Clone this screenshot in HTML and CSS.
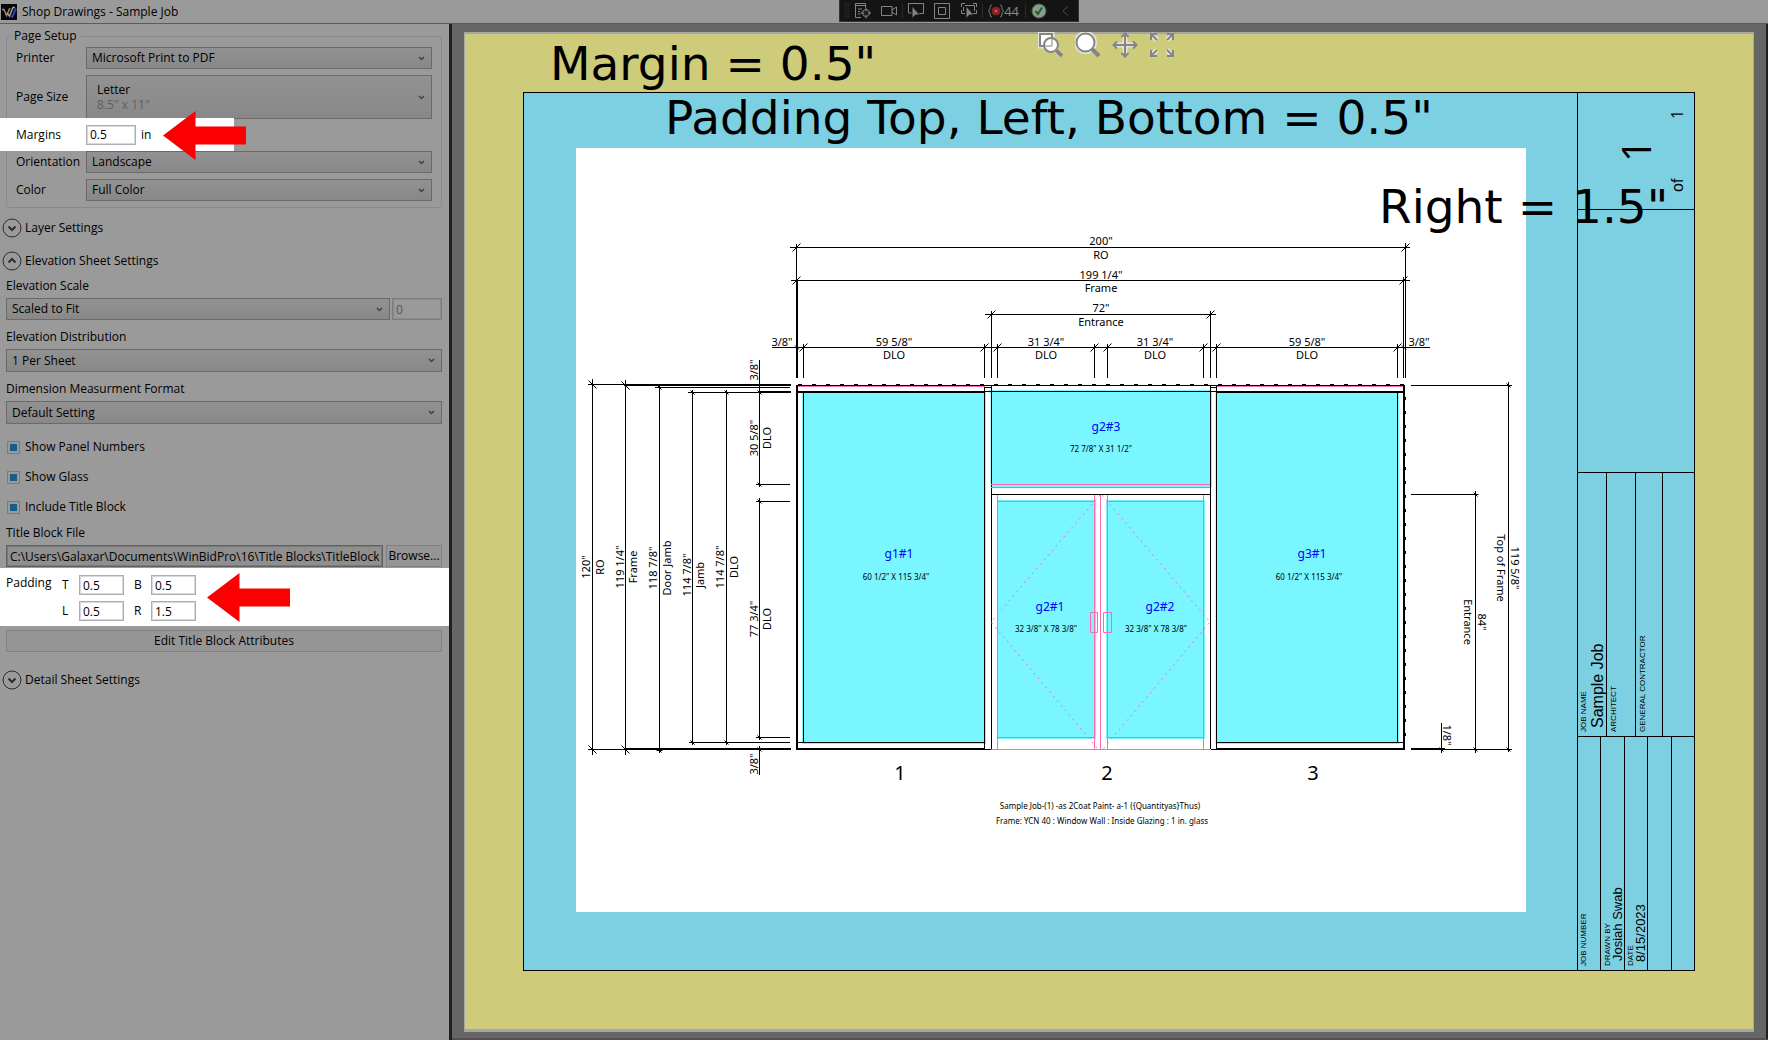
FILE: index.html
```html
<!DOCTYPE html>
<html lang="en">
<head>
<meta charset="utf-8">
<title>Shop Drawings - Sample Job</title>
<link rel="stylesheet" href="styles.css">
</head>
<body>
<header class="titlebar">
  <div class="titlebar-name">
    <svg class="app-icon" viewBox="0 0 16 16" aria-hidden="true"><rect width="16" height="16" fill="#05060c"/><path d="M1 5.500h2l2.500 6L9 4" fill="none" stroke="#9a8a7c" stroke-width="1.500"/><path d="M6 9l2.500 3L12 3.500h2" fill="none" stroke="#b09c8a" stroke-width="1.500"/><path d="M9.500 12.500h2L15 4.500" fill="none" stroke="#2a44b0" stroke-width="2"/></svg>
    <h1>Shop Drawings - Sample Job</h1>
  </div>
  <div class="debugbar" role="toolbar" aria-label="Debug tools">
    <svg class="grip" viewBox="0 0 6 18" aria-hidden="true"><path d="M1 0v18M5 0v18" stroke="#4c4c4c" stroke-width="1" stroke-dasharray="1 2"/><path d="M3 1v16" stroke="#4c4c4c" stroke-dasharray="1 2"/></svg>
    <button aria-label="Go to live visual tree"><svg viewBox="0 0 16 16"><path d="M6 14.500H.5V.5h10v4M.5 2.500h10M3 6h4M3 8.500h2M3 11h2"/><circle cx="11" cy="10" r="3.500"/><path d="M11 4.500v4M11 11.500v4M5.500 10h4M12.500 10h3.500"/></svg></button>
    <button aria-label="Record"><svg viewBox="0 0 16 16"><path d="M0.500 3.500h10.500v9H.5zM11 7l4.500-3v8L11 9"/></svg></button>
    <i class="bar-rule"></i>
    <button aria-label="Select element"><svg viewBox="0 0 16 16"><path d="M4 10H0.500V.5h15v10H11"/><path class="solid" d="M4 3v12.500l3.500-3.500h4.500z"/></svg></button>
    <button aria-label="Display layout adorners"><svg viewBox="0 0 16 16"><path d="M.5.5h15v15H.5zM4.500 4.500h7v7h-7z"/></svg></button>
    <button aria-label="Track focused element"><svg viewBox="0 0 16 16"><path d="M.5 4V.5H4M12 .5h3.500V4M.5 7v3.500H4M12 10.500h3.500V7M4 2.500h9.500V8M2.500 4v4"/><path class="solid" d="M5 3v12.500l3.500-3.500h4.500z"/></svg></button>
    <i class="bar-rule"></i>
    <button class="failures" aria-label="Binding failures"><svg viewBox="0 0 16 16"><path d="M4 2C1 2 3 7 .5 8 3 9 1 14 4 14M12 2c3 0 1 5 3.500 6C13 9 15 14 12 14"/><circle cx="8" cy="8" r="4" fill="#8e1c1c" stroke="#8e1c1c"/><path d="M6.500 6.500l3 3M9.500 6.500l-3 3"/></svg><span>44</span></button>
    <i class="bar-rule"></i>
    <button aria-label="Hot reload"><svg viewBox="0 0 16 16"><circle cx="8" cy="8" r="7" fill="#8e9a8e" stroke="#2f7338"/><path d="M4.500 8l2.500 3 4-6.500" stroke="#1f5f2a" stroke-width="2"/></svg></button>
    <button aria-label="Collapse"><svg viewBox="0 0 16 16"><path d="M11 3.500L6 8l5 4.500" stroke="#4c4c4c"/></svg></button>
  </div>
</header>

<div class="workspace">
  <form class="settings">
    <fieldset class="group">
      <legend>Page Setup</legend>
      <div class="field"><label for="printer">Printer</label><select id="printer"><option>Microsoft Print to PDF</option></select></div>
      <div class="field"><label for="size">Page Size</label><div class="size-box"><select id="size"><option>Letter</option></select><span class="size-note">8.5" x 11"</span></div></div>
      <div class="field spot-row"><label for="margins">Margins</label><input id="margins" value="0.5"><span>in</span>
        <svg class="arrow" viewBox="0 0 83 49" aria-hidden="true"><path d="M0 24.500L32.500 0v15.500H83v18H32.500V49z"/></svg></div>
      <div class="field"><label for="orientation">Orientation</label><select id="orientation"><option>Landscape</option></select></div>
      <div class="field"><label for="color">Color</label><select id="color"><option>Full Color</option></select></div>
    </fieldset>

    <button type="button" class="expander"><svg viewBox="0 0 20 20"><circle cx="10" cy="10" r="9"/><path d="M6.500 8.500L10 12l3.500-3.500"/></svg>Layer Settings</button>
    <button type="button" class="expander" aria-expanded="true"><svg viewBox="0 0 20 20"><circle cx="10" cy="10" r="9"/><path d="M6.500 11.500L10 8l3.500 3.500"/></svg>Elevation Sheet Settings</button>

    <div class="stack first">
      <label for="scale">Elevation Scale</label>
      <div class="pair"><select id="scale"><option>Scaled to Fit</option></select><input class="muted" aria-label="Scale value" value="0" disabled></div>
    </div>
    <div class="stack">
      <label for="dist">Elevation Distribution</label>
      <select id="dist"><option>1 Per Sheet</option></select>
    </div>
    <div class="stack">
      <label for="format">Dimension Measurment Format</label>
      <select id="format"><option>Default Setting</option></select>
    </div>
    <div class="checks">
      <label><input type="checkbox" checked>Show Panel Numbers</label>
      <label><input type="checkbox" checked>Show Glass</label>
      <label><input type="checkbox" checked>Include Title Block</label>
    </div>
    <div class="stack file">
      <label for="file">Title Block File</label>
      <div class="pair"><input id="file" class="path" value="C:\Users\Galaxar\Documents\WinBidPro\16\Title Blocks\TitleBlock-8.5x11.dxf"><button type="button" class="push">Browse...</button></div>
    </div>
    <div class="padding-band">
      <span class="band-name">Padding</span>
      <div class="pads">
        <label for="pt">T</label><input id="pt" value="0.5"><label for="pb">B</label><input id="pb" value="0.5">
        <label for="pl">L</label><input id="pl" value="0.5"><label for="pr">R</label><input id="pr" value="1.5">
      </div>
      <svg class="arrow" viewBox="0 0 83 49" aria-hidden="true"><path d="M0 24.500L32.500 0v15.500H83v18H32.500V49z"/></svg>
    </div>
    <button type="button" class="push wide">Edit Title Block Attributes</button>
    <button type="button" class="expander last"><svg viewBox="0 0 20 20"><circle cx="10" cy="10" r="9"/><path d="M6.500 8.500L10 12l3.500-3.500"/></svg>Detail Sheet Settings</button>
  </form>

  <main class="preview">
    <svg class="sheet" viewBox="465 34 1288 995" role="img" aria-label="Sheet preview">
      <defs>
        <path id="t" d="M-4 4L4-4"/>
        <path id="k" d="M-4-4L4 4"/>
        <path id="s" d="M-2-2L2 2M-3 0H3"/>
      </defs>
      <rect class="padding" x="523.500" y="92.500" width="1171" height="878"/>
      <rect class="paper" x="576" y="148" width="950" height="764"/>

      <!-- title block grid -->
      <path class="ln" d="M1577.500 92V970M1577 209.500H1694M1577 472.500H1694M1577 736.500H1694M1606.500 472V736M1635.500 472V736M1662.500 472V736M1600.500 736V970M1624.500 736V970M1647.500 736V970M1671.500 736V970"/>
      <g class="block">
        <text class="b16 sheet-no" transform="translate(1683 119) rotate(-90)">1</text>
        <text class="b40 sheet-no" transform="translate(1651 162) rotate(-90)">1</text>
        <text class="b16" transform="translate(1683 192) rotate(-90)">of</text>
        <text class="b8" transform="translate(1586 732) rotate(-90)">JOB NAME</text>
        <text class="b16" transform="translate(1603 728) rotate(-90)">Sample Job</text>
        <text class="b8" transform="translate(1616 732) rotate(-90)">ARCHITECT</text>
        <text class="b8" transform="translate(1645 732) rotate(-90)">GENERAL CONTRACTOR</text>
        <text class="b8" transform="translate(1586 966) rotate(-90)">JOB NUMBER</text>
        <text class="b8" transform="translate(1610 966) rotate(-90)">DRAWN BY</text>
        <text class="b13" transform="translate(1622 961) rotate(-90)">Josiah Swab</text>
        <text class="b8" transform="translate(1633 966) rotate(-90)">DATE</text>
        <text class="b13" transform="translate(1645 962) rotate(-90)">8/15/2023</text>
      </g>

      <!-- glass -->
      <g class="glass">
        <rect x="802" y="392" width="184" height="352"/>
        <rect x="989" y="390" width="223" height="97"/>
        <rect x="997" y="500" width="99" height="239"/>
        <rect x="1106" y="500" width="99" height="239"/>
        <rect x="1215" y="392" width="184" height="352"/>
      </g>
      <path class="mullion" d="M986.500 393V749h4V393zM1212.500 393V749h3V393z"/>

      <!-- aluminium frame -->
      <path class="ln" d="M797 385.500H1405M803.500 392V743M984.500 386V749M991.500 386V749M1210.500 386V749M1216.500 386V749M1397.500 392V743M985 387.500H991M1211 387.500H1216M985 391.500H1216M798 742.500H985M1217 742.500H1403M985 749.500H991M1211 749.500H1216M991 494.500H1210"/>
      <path class="ln w2" d="M797 385V749M798 392H985M1216 392H1403M796 749H985M1216 749H1404M1404 385V750"/>
      <path class="ln" stroke-dasharray="4 10" d="M798 384.500H1405"/>
      <path class="ln" stroke-dasharray="3 11" d="M1405.500 397V745"/>
      <path class="pk" d="M798 386.500H985M1217 386.500H1403M991 484.500H1210M991 487.500H1210M997.500 495V749M1094.500 495V749M1107.500 495V749M1203.500 495V749M1100.500 495V749M991 749.500H1210M997 501.500H1095M1107 501.500H1204M997 737.500H1095M1107 737.500H1204M1090.500 612.500h7v20h-7zM1103.500 612.500h8v20h-8z"/>
      <path class="pk swing" d="M1100 495L991 622L1098 749M1102 495L1210 622L1103 749"/>

      <!-- dimensions above -->
      <path class="ln" d="M790 247.500H1410M791 280.500H1410M985 314.500H1216M772 347.500H1430M796.500 244V378M803.500 344V378M984.500 344V378M991.500 311V378M997.500 344V378M1094.500 344V378M1107.500 344V378M1203.500 344V378M1210.500 311V378M1216.500 344V378M1397.500 344V378M1403.500 277V378M1405.500 243V378"/>
      <path class="ln" d="M797.500 280V378"/>
      <g class="ln">
        <use href="#t" x="796.500" y="247.500"/><use href="#t" x="1405.500" y="247.500"/>
        <use href="#t" x="796.500" y="280.500"/><use href="#t" x="1403.500" y="280.500"/>
        <use href="#t" x="991.500" y="314.500"/><use href="#t" x="1210.500" y="314.500"/>
        <use href="#t" x="803.500" y="347.500"/><use href="#t" x="984.500" y="347.500"/><use href="#t" x="997.500" y="347.500"/><use href="#t" x="1094.500" y="347.500"/><use href="#t" x="1107.500" y="347.500"/><use href="#t" x="1203.500" y="347.500"/><use href="#t" x="1216.500" y="347.500"/><use href="#t" x="1397.500" y="347.500"/>
        <use href="#s" x="797" y="347.500"/><use href="#s" x="1404" y="347.500"/>
      </g>
      <g class="dim">
        <text x="1101" y="245">200"</text><text x="1101" y="259">RO</text>
        <text x="1101" y="279">199 1/4"</text><text x="1101" y="292">Frame</text>
        <text x="1101" y="312">72"</text><text x="1101" y="326">Entrance</text>
        <text x="894" y="346">59 5/8"</text><text x="894" y="359">DLO</text>
        <text x="1046" y="346">31 3/4"</text><text x="1046" y="359">DLO</text>
        <text x="1155" y="346">31 3/4"</text><text x="1155" y="359">DLO</text>
        <text x="1307" y="346">59 5/8"</text><text x="1307" y="359">DLO</text>
        <text x="782" y="346">3/8"</text><text x="1419" y="346">3/8"</text>
      </g>

      <!-- dimensions at left -->
      <path class="ln" d="M592.500 379V755M625.500 380V755M659.500 385V753M692.500 390V745M726.500 390V745M759.500 360V487M759.500 498V740M759.500 746V775M588 384.500H626M655 387.500H790M688 392.500H790M756 484.500H790M756 501.500H790M756 737.500H790M689 742.500H790M588 749.500H626"/>
      <path class="ln w2" d="M624 385H791M759 392H791M624 749H791"/>
      <g class="ln">
        <use href="#k" x="592.500" y="384.500"/><use href="#k" x="592.500" y="749.500"/><use href="#k" x="625.500" y="385.500"/><use href="#k" x="625.500" y="749.500"/>
        <use href="#s" x="659.500" y="387.500"/><use href="#s" x="659.500" y="750.500"/><use href="#s" x="692.500" y="392.500"/><use href="#s" x="692.500" y="742.500"/><use href="#s" x="726.500" y="392.500"/><use href="#s" x="726.500" y="742.500"/>
        <use href="#s" x="759.500" y="392.500"/><use href="#s" x="759.500" y="484.500"/><use href="#s" x="759.500" y="501.500"/><use href="#s" x="759.500" y="737.500"/><use href="#s" x="759.500" y="749.500"/>
      </g>
      <g class="dim">
        <text transform="translate(590 567) rotate(-90)">120"</text><text transform="translate(604 567) rotate(-90)">RO</text>
        <text transform="translate(624 567) rotate(-90)">119 1/4"</text><text transform="translate(637 567) rotate(-90)">Frame</text>
        <text transform="translate(657 568) rotate(-90)">118 7/8"</text><text transform="translate(671 568) rotate(-90)">Door Jamb</text>
        <text transform="translate(691 575) rotate(-90)">114 7/8"</text><text transform="translate(704 575) rotate(-90)">Jamb</text>
        <text transform="translate(724 567) rotate(-90)">114 7/8"</text><text transform="translate(738 567) rotate(-90)">DLO</text>
        <text transform="translate(758 438) rotate(-90)">30 5/8"</text><text transform="translate(771 438) rotate(-90)">DLO</text>
        <text transform="translate(758 619) rotate(-90)">77 3/4"</text><text transform="translate(771 619) rotate(-90)">DLO</text>
        <text transform="translate(758 370) rotate(-90)">3/8"</text><text transform="translate(758 764) rotate(-90)">3/8"</text>
      </g>

      <!-- dimensions at right -->
      <path class="ln" d="M1411 385.500H1512M1508.500 382V752M1411 494.500H1478M1475.500 491V753M1441.500 723V753M1411 749.500H1512"/>
      <path class="ln w2" d="M1411 749H1445"/>
      <g class="ln"><use href="#s" x="1508.500" y="385.500"/><use href="#s" x="1508.500" y="749.500"/><use href="#s" x="1475.500" y="494.500"/><use href="#s" x="1475.500" y="749.500"/><use href="#s" x="1441.500" y="749.500"/></g>
      <g class="dim">
        <text transform="translate(1443 735) rotate(90)">1/8"</text>
        <text transform="translate(1478 622) rotate(90)">84"</text><text transform="translate(1464 622) rotate(90)">Entrance</text>
        <text transform="translate(1511 568) rotate(90)">119 5/8"</text><text transform="translate(1497 568) rotate(90)">Top of Frame</text>
      </g>

      <g class="tag">
        <text x="899" y="558">g1#1</text><text x="1106" y="431">g2#3</text><text x="1050" y="611">g2#1</text><text x="1160" y="611">g2#2</text><text x="1312" y="558">g3#1</text>
      </g>
      <g class="note">
        <text x="896" y="580">60 1/2" X 115 3/4"</text><text x="1101" y="452">72 7/8" X 31 1/2"</text><text x="1046" y="632">32 3/8" X 78 3/8"</text><text x="1156" y="632">32 3/8" X 78 3/8"</text><text x="1309" y="580">60 1/2" X 115 3/4"</text>
        <text x="1100" y="809">Sample Job-(1) -as 2Coat Paint- a-1 ({Quantityas}Thus)</text>
        <text x="1102" y="824">Frame: YCN 40 : Window Wall : Inside Glazing : 1 in. glass</text>
      </g>
      <g class="panel-no"><text x="900" y="780">1</text><text x="1107" y="780">2</text><text x="1313" y="780">3</text></g>
      <g class="callout">
        <text x="550" y="80">Margin = 0.5"</text>
        <text x="665" y="134">Padding Top, Left, Bottom = 0.5"</text>
        <text x="1379" y="223">Right = 1.5"</text>
      </g>
    </svg>
    <nav class="view-tools" aria-label="View">
      <button aria-label="Zoom window"><svg viewBox="0 0 26 26"><path class="halo" d="M2 2h12v12H2z"/><path class="fill" d="M2 2h12v12H2z"/><circle class="fill" cx="13" cy="13" r="7"/><path d="M7 14h7V7" stroke-width="1"/><path class="halo" d="M18 18l6 6"/><path d="M18 18l6 6" stroke-width="4"/></svg></button>
      <button aria-label="Zoom"><svg viewBox="0 0 26 26"><circle class="halo" cx="10.500" cy="10.500" r="9"/><circle class="fill" cx="10.500" cy="10.500" r="9"/><path d="M17 17l7 7" stroke-width="4"/></svg></button>
      <button aria-label="Pan"><svg viewBox="0 0 26 26"><path class="halo" d="M13 2v22M2 13h22"/><path d="M13 2v22M2 13h22M9.500 5L13 1.500 16.500 5M9.500 21l3.500 3.500 3.500-3.500M5 9.500L1.500 13 5 16.500M21 9.500l3.500 3.500-3.500 3.500"/></svg></button>
      <button aria-label="Fit to window"><svg viewBox="0 0 26 26"><path class="halo" d="M2 2l6 6M24 2l-6 6M2 24l6-6M24 24l-6-6"/><path d="M2 8V2h6M2 2l6 6M18 2h6v6M24 2l-6 6M2 18v6h6M2 24l6-6M24 18v6h-6M24 24l-6-6"/></svg></button>
    </nav>
  </main>
</div>
</body>
</html>
```
FILE: styles.css
```css
* { box-sizing: border-box; }
body {
  margin: 0;
  min-height: 100vh;
  display: flex;
  flex-direction: column;
  background: #9a9a9a;
  color: #000;
  font: 12px/16px "Open Sans", "Noto Sans", sans-serif;
}
button, input, select { font: inherit; color: inherit; margin: 0; }
button { padding: 0; border: 0; background: none; }

/* title bar */
.titlebar {
  display: grid;
  grid-template-columns: 4745fr 5255fr;
  height: 24px;
  border-bottom: 1px solid #5c5c5c;
}
.titlebar-name { display: flex; align-items: center; gap: 5px; padding-left: 1px; }
.titlebar h1 { margin: 0; font-size: 12px; font-weight: 400; }
.app-icon { width: 16px; height: 16px; }
.debugbar {
  justify-self: start;
  display: flex;
  align-items: center;
  width: 240px;
  height: 22px;
  padding: 0 0 0 4px;
  background: #141414;
  border: 1px solid #333;
  border-top: 0;
  color: #8a8a8a;
}
.debugbar button { flex: 1 1 26px; height: 20px; display: flex; align-items: center; justify-content: center; }
.debugbar svg { width: 16px; height: 16px; fill: none; stroke: #848484; flex: none; }
.debugbar .solid { fill: #848484; stroke: #141414; stroke-width: 1; }
.debugbar .grip { width: 6px; }
.debugbar .failures { flex: 0 0 42px; font-size: 13px; }
.bar-rule { width: 1px; height: 14px; background: #2c2c2c; }

/* settings column */
.workspace { flex: 1; display: grid; grid-template-columns: 452px minmax(0, 1fr); }
.settings {
  display: flex;
  flex-direction: column;
  border-right: 3px solid #1f2020;
  min-width: 0;
}
.group {
  margin: 4px 7px 0 6px;
  padding: 3px 9px 6px;
  border: 1px solid #85898c;
  border-radius: 4px;
  display: flex;
  flex-direction: column;
  gap: 6px;
}
.group legend { padding: 0 4px; margin-left: -6px; }
.field { display: grid; grid-template-columns: 70px 1fr; align-items: center; }
select {
  appearance: none;
  width: 100%;
  height: 22px;
  padding: 0 20px 0 5px;
  border: 1px solid #6a6a6a;
  border-radius: 0;
  background: url("data:image/svg+xml,%3Csvg xmlns='http://www.w3.org/2000/svg' width='7' height='5'%3E%3Cpath d='M1 1l2.500 2.500L6 1' fill='none' stroke='%23404040' stroke-width='1.500'/%3E%3C/svg%3E") no-repeat right 6px center, linear-gradient(#929292, #888);
}
.size-box { position: relative; }
.size-box select { height: 44px; padding: 0 20px 14px 10px; }
.size-note { position: absolute; left: 11px; top: 22px; color: #606060; pointer-events: none; }
input {
  height: 20px;
  padding: 0 3px;
  border: 1px solid #abadb3;
  border-radius: 0;
  background: #fff;
  box-shadow: inset 0 0 0 1px #d8d9dc;
}
.spot-row {
  position: relative;
  grid-template-columns: 70px 50px auto;
  width: 234px;
  height: 33px;
  margin: -7px 0 -6px -16px;
  padding-left: 16px;
  background: #fff;
}
.spot-row span { padding-left: 5px; }
.arrow { position: absolute; width: 83px; height: 49px; fill: #fa0000; }
.spot-row .arrow { left: 163px; top: -7px; }

.expander { display: flex; align-items: center; gap: 3px; height: 20px; margin: 10px 0 3px 2px; text-align: left; }
.expander svg { width: 20px; height: 20px; fill: none; stroke: #2c2c2c; }
.expander path { stroke-width: 2; }
.stack { display: flex; flex-direction: column; gap: 4px; padding: 5px 7px 4px 6px; }
.first { padding-top: 4px; }
.stack > select { height: 23px; }
.pair { display: grid; grid-template-columns: 1fr 50px; gap: 2px; }
.pair input { height: 22px; min-width: 0; }
.muted { background: #9a9a9a; border-color: #7c7c7c; box-shadow: inset 0 0 0 1px #8c8c8c; color: #555; }
.checks { display: flex; flex-direction: column; gap: 14px; padding: 11px 7px 5px; }
.checks label { display: flex; align-items: center; gap: 5px; }
.checks input {
  appearance: none;
  width: 13px;
  height: 13px;
  padding: 2px;
  border-color: #7a7a7a;
  background: #165f86 content-box;
  box-shadow: none;
}
.file .pair { grid-template-columns: 1fr 56px; gap: 3px; }
.file { padding-bottom: 1px; }
.path { background: #8f8f8f; border-color: #606060; box-shadow: inset 0 0 0 1px #7a7a7a; }
.push { height: 22px; border: 1px solid #808080; background: #959595; text-align: center; }
.wide { margin: 4px 7px 0 6px; }
.padding-band { position: relative; display: flex; height: 58px; padding: 7px 0 0 6px; background: #fff; }
.band-name { width: 56px; }
.pads {
  display: grid;
  grid-template-columns: 17px 55px 17px 45px;
  row-gap: 6px;
  align-content: start;
  align-items: center;
}
.pads input { width: 45px; }
.padding-band .arrow { left: 207px; top: 5px; }
.last { margin-top: 18px; }

/* preview */
.preview {
  position: relative;
  padding: 8px 12px 6px;
  background: #666;
  border-right: 2px solid #1f2020;
  border-bottom: 2px solid #554f52;
}
.sheet {
  display: block;
  box-sizing: content-box;
  width: calc(100% - 2px);
  height: auto;
  border: 1px solid #a6a6a6;
  border-width: 2px 1px 3px;
  background: #cecb7b;
}
.padding { fill: #7dd0e1; stroke: #000; }
.paper, .mullion { fill: #fff; }
.ln { fill: none; stroke: #000; }
.w2 { stroke-width: 2; }
.pk { fill: none; stroke: #ff69b4; }
.swing { stroke-dasharray: 2 4; }
.glass { fill: #79f6ff; }
.dim { font: 11px "Noto Sans", sans-serif; text-anchor: middle; }
.tag { font: 12px "Noto Sans", sans-serif; text-anchor: middle; fill: #00f; }
.note { font: 8px "Noto Sans", sans-serif; text-anchor: middle; }
.panel-no { font: 20px "Noto Sans", sans-serif; text-anchor: middle; }
.block { font-family: "Liberation Sans", Arial, sans-serif; }
.b8 { font-size: 8px; }
.b13 { font-size: 13px; }
.b16 { font-size: 16px; }
.b40 { font-size: 40px; }
.sheet-no { font-family: "Open Sans", "Noto Sans", sans-serif; }
.callout { font: 47px "DejaVu Sans", Verdana, sans-serif; }
.view-tools {
  position: absolute;
  top: 8px;
  left: 0;
  right: 6px;
  display: flex;
  justify-content: center;
  gap: 11px;
}
.view-tools svg { display: block; width: 26px; height: 26px; fill: none; stroke: #858585; stroke-width: 2; }
.view-tools .halo { stroke: #e4e4dc; stroke-width: 5; }
.view-tools .fill { fill: #fff; }
```
